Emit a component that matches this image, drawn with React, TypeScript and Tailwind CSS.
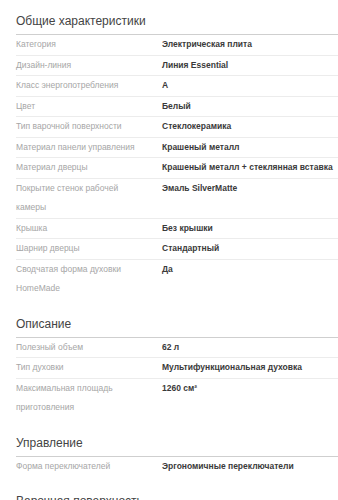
type Spec = { label: string; value: string };

const sections: { title: string; rows: Spec[] }[] = [
  {
    title: 'Общие характеристики',
    rows: [
      { label: 'Категория', value: 'Электрическая плита' },
      { label: 'Дизайн-линия', value: 'Линия Essential' },
      { label: 'Класс энергопотребления', value: 'A' },
      { label: 'Цвет', value: 'Белый' },
      { label: 'Тип варочной поверхности', value: 'Стеклокерамика' },
      { label: 'Материал панели управления', value: 'Крашеный металл' },
      { label: 'Материал дверцы', value: 'Крашеный металл + стеклянная вставка' },
      { label: 'Покрытие стенок рабочей камеры', value: 'Эмаль SilverMatte' },
      { label: 'Крышка', value: 'Без крышки' },
      { label: 'Шарнир дверцы', value: 'Стандартный' },
      { label: 'Сводчатая форма духовки HomeMade', value: 'Да' },
    ],
  },
  {
    title: 'Описание',
    rows: [
      { label: 'Полезный объем', value: '62 л' },
      { label: 'Тип духовки', value: 'Мультифункциональная духовка' },
      { label: 'Максимальная площадь приготовления', value: '1260 см²' },
    ],
  },
  {
    title: 'Управление',
    rows: [{ label: 'Форма переключателей', value: 'Эргономичные переключатели' }],
  },
  {
    title: 'Варочная поверхность',
    rows: [{ label: 'Количество конфорок', value: '4' }],
  },
];

function Section({ title, rows }: { title: string; rows: Spec[] }) {
  return (
    <section className="pt-[15px] first:pt-[11px]">
      <h2 className="text-[12px] leading-[20px] pb-[3px] text-[#444] border-b border-[#cfcfcf]">{title}</h2>
      <dl>
        {rows.map((r, i) => (
          <div
            key={r.label}
            className={`flex text-[8.5px] leading-[19.5px] ${i < rows.length - 1 ? 'border-b border-[#ececec]' : ''}`}
          >
            <dt className="w-[146px] shrink-0 text-[#a6a6a6] pr-[20px]">{r.label}</dt>
            <dd className="flex-1 font-bold text-[#3a3a3a]">{r.value}</dd>
          </div>
        ))}
      </dl>
    </section>
  );
}

export default function App() {
  return (
    <div className="h-[500px] overflow-hidden bg-white pl-4 font-['Liberation_Sans',Arial,sans-serif]">
      {sections.map((s) => (
        <Section key={s.title} title={s.title} rows={s.rows} />
      ))}
    </div>
  );
}
